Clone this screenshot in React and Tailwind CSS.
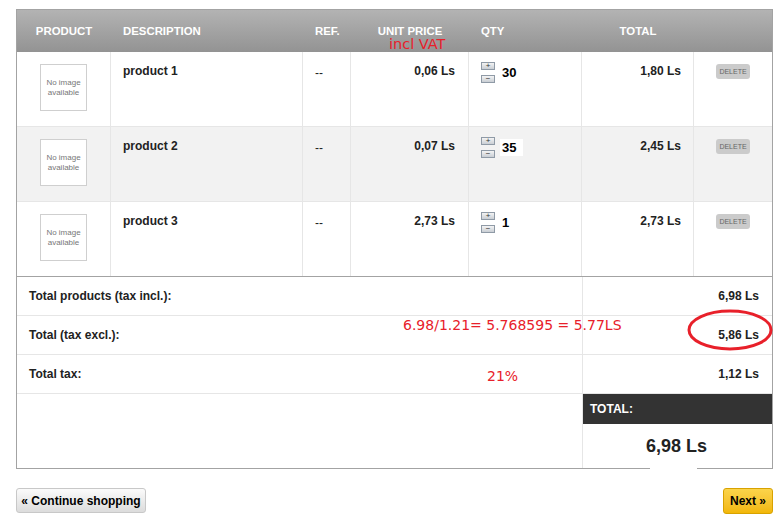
// Shopping cart summary — order step with annotated VAT calculation

const COLS = "grid grid-cols-[94px_192px_48px_118px_113px_112px_78px]";

const PRODUCTS = [
  { name: "product 1", ref: "--", price: "0,06 Ls", qty: "30", total: "1,80 Ls", shaded: false, input: false },
  { name: "product 2", ref: "--", price: "0,07 Ls", qty: "35", total: "2,45 Ls", shaded: true, input: true },
  { name: "product 3", ref: "--", price: "2,73 Ls", qty: "1", total: "2,73 Ls", shaded: false, input: false },
];

const SUMMARY = [
  { label: "Total products (tax incl.):", value: "6,98 Ls" },
  { label: "Total (tax excl.):", value: "5,86 Ls" },
  { label: "Total tax:", value: "1,12 Ls" },
];

const NOTE_FONT = { fontFamily: '"DejaVu Sans", sans-serif' };

function NoImage() {
  return (
    <div className="w-[47px] h-[47px] border border-[#cfcfcf] bg-white flex items-center justify-center text-center text-[8px] leading-[10px] text-[#777]">
      No image
      <br />
      available
    </div>
  );
}

function QtyButton({ sign }) {
  return (
    <div className="w-[14px] h-[8px] border border-[#8f9aa6] bg-gradient-to-b from-[#f4f4f4] to-[#c9ced4] flex items-center justify-center text-[8px] leading-none text-[#333]">
      {sign}
    </div>
  );
}

export default function App() {
  return (
    <div
      className="relative w-[782px] h-[524px] bg-white text-[12px] text-[#222]"
      style={{ fontFamily: '"Liberation Sans", Arial, sans-serif' }}
    >
      <div className="pt-[9px] pl-[16px]">
        <div className="w-[757px] border border-[#a3a3a3]">
          {/* ── Header ─────────────────────────────────── */}
          <div className={`${COLS} h-[42px] bg-gradient-to-b from-[#b3b3b3] to-[#939393] text-white text-[11.4px] font-bold uppercase items-start pt-[14px] leading-[14px]`}>
            <div className="text-center">Product</div>
            <div className="pl-[12px]">Description</div>
            <div className="pl-[12px]">Ref.</div>
            <div className="text-center">Unit price</div>
            <div className="pl-[12px]">Qty</div>
            <div className="text-center">Total</div>
            <div />
          </div>

          {/* ── Product rows ───────────────────────────── */}
          {PRODUCTS.map((p, i) => (
            <div
              key={p.name}
              className={`${COLS} h-[75px] ${i < 2 ? "border-b border-[#e6e6e6]" : "border-b border-[#a3a3a3]"} ${p.shaded ? "bg-[#f2f2f2]" : "bg-white"}`}
            >
              <div className="flex justify-center pt-[12px] border-r border-[#e6e6e6]">
                <NoImage />
              </div>
              <div className="pl-[12px] pt-[12px] font-bold leading-[14px] border-r border-[#e6e6e6]">{p.name}</div>
              <div className="pl-[12px] pt-[14px] leading-[14px] border-r border-[#e6e6e6]">{p.ref}</div>
              <div className="pr-[13px] pt-[12px] text-right font-bold leading-[14px] border-r border-[#e6e6e6]">{p.price}</div>
              <div className="pl-[12px] pt-[10px] flex items-start gap-[5px] border-r border-[#e6e6e6]">
                <div className="flex flex-col gap-[5px]">
                  <QtyButton sign="+" />
                  <QtyButton sign="−" />
                </div>
                <div
                  className={`mt-[2px] h-[17px] w-[23px] pl-[2px] font-bold text-[13px] leading-[17px] text-black ${p.input ? "bg-white" : ""}`}
                >
                  {p.qty}
                </div>
              </div>
              <div className="pr-[12px] pt-[12px] text-right font-bold leading-[14px] border-r border-[#e6e6e6]">{p.total}</div>
              <div className="flex justify-center pt-[12px]">
                <div className="h-[15px] px-[3px] rounded-[3px] bg-[#cbcbcb] text-[#666] text-[7px] leading-[15px]">
                  DELETE
                </div>
              </div>
            </div>
          ))}

          {/* ── Summary ────────────────────────────────── */}
          <div className="grid grid-cols-[565px_190px]">
            {SUMMARY.map((s) => (
              <div key={s.label} className="contents">
                <div className="h-[39px] border-b border-[#e6e6e6] pl-[12px] pt-[12px] font-bold leading-[14px]">{s.label}</div>
                <div className="h-[39px] border-b border-l border-[#e6e6e6] pr-[13px] pt-[12px] text-right font-bold leading-[14px]">
                  {s.value}
                </div>
              </div>
            ))}
            <div className="h-[74px]" />
            <div className="h-[74px] border-l border-[#e6e6e6]">
              <div className="h-[30px] bg-[#333333] text-white font-bold pl-[7px] leading-[30px]">TOTAL:</div>
              <div className="text-center font-bold text-[18px] leading-[20px] pt-[12px] pr-[2px]">6,98 Ls</div>
            </div>
          </div>
        </div>
      </div>

      {/* ── Buttons ──────────────────────────────────── */}
      <div className="flex justify-between pl-[16px] pr-[9px] mt-[19px]">
        <button className="h-[25px] w-[130px] rounded-[3px] border border-[#c8c8c8] bg-gradient-to-b from-[#fbfbfb] to-[#dcdcdc] font-bold text-[12px] text-black">
          « Continue shopping
        </button>
        <button className="h-[26px] w-[50px] rounded-[3px] border border-[#d8a200] bg-gradient-to-b from-[#fbd44a] to-[#f2b705] font-bold text-[12px] text-black">
          Next »
        </button>
      </div>

      {/* ── Annotations drawn over the screenshot ────── */}
      <div className="absolute left-[650px] top-[466px] w-[47px] h-[3px] bg-white" />
      <div className="absolute left-[389px] top-[37px] text-[14.5px] leading-[15px] text-[#e8202a]" style={NOTE_FONT}>
        incl VAT
      </div>
      <div className="absolute left-[403px] top-[317px] text-[14px] leading-[17px] text-[#e8202a]" style={NOTE_FONT}>
        6.98/1.21= 5.768595 = 5.77LS
      </div>
      <div className="absolute left-[487px] top-[368px] text-[14px] leading-[17px] text-[#e8202a]" style={NOTE_FONT}>
        21%
      </div>
      <svg className="absolute left-[686px] top-[308px]" width="90" height="44" viewBox="0 0 90 44">
        <ellipse cx="44" cy="22" rx="41" ry="19" fill="none" stroke="#e8202a" strokeWidth="3" />
      </svg>
    </div>
  );
}
